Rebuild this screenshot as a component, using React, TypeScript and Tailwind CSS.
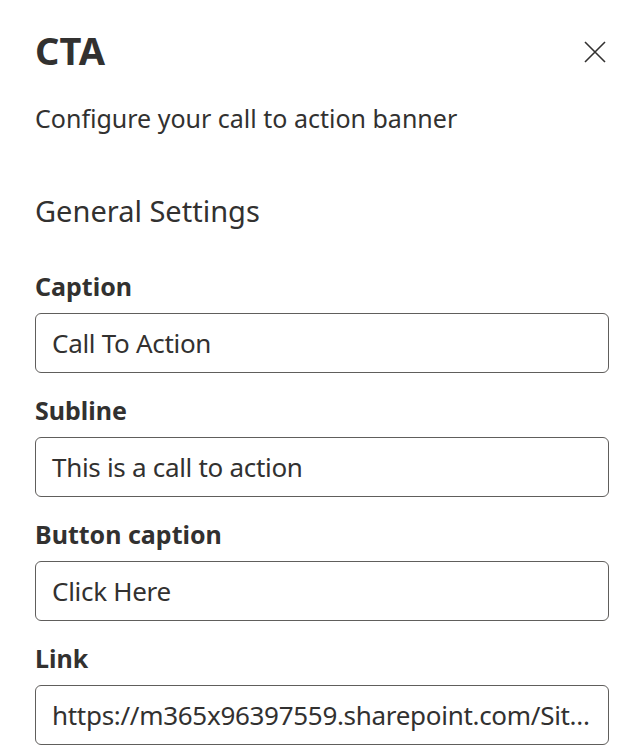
import React from "react";

type FieldProps = {
  label: string;
  value: string;
};

const fields: FieldProps[] = [
  { label: "Caption", value: "Call To Action" },
  { label: "Subline", value: "This is a call to action" },
  { label: "Button caption", value: "Click Here" },
  { label: "Link", value: "https://m365x96397559.sharepoint.com/Sit..." },
];

const Field: React.FC<FieldProps> = ({ label, value }) => {
  return (
    <div className="flex flex-col">
      <label className="text-[25px] font-bold leading-[34px] pt-[20px] pb-[10px]">{label}</label>
      <div className="h-[60px] border-[1.5px] border-[#605e5c] rounded-[6px] px-[16px] flex items-center">
        <span className="text-[26px] leading-[34px] tracking-[-0.3px] whitespace-nowrap">{value}</span>
      </div>
    </div>
  );
};

const App: React.FC = () => {
  return (
    <div
      className="w-[640px] h-[751px] bg-white text-[#323130] overflow-hidden"
      style={{ fontFamily: '"Noto Sans", "Open Sans", sans-serif' }}
    >
      <div className="pl-[35px] pr-[31px] pt-[26px]">
        <div className="flex items-start justify-between">
          <h1 className="text-[38px] font-bold leading-[48px]">CTA</h1>
          <button className="w-[28px] h-[28px] mt-[12px] flex items-center justify-center text-[#323130]">
            <svg width="24" height="24" viewBox="0 0 24 24" fill="none" stroke="currentColor" strokeWidth="1.6">
              <path d="M2 2L22 22M22 2L2 22" />
            </svg>
          </button>
        </div>
        <p className="text-[25px] leading-[34px] mt-[27px]">Configure your call to action banner</p>
        <h2 className="text-[29px] leading-[40px] mt-[56px]">General Settings</h2>
        <div className="flex flex-col mt-[18px]">
          {fields.map((field) => (
            <Field key={field.label} label={field.label} value={field.value} />
          ))}
        </div>
      </div>
    </div>
  );
};

export default App;
